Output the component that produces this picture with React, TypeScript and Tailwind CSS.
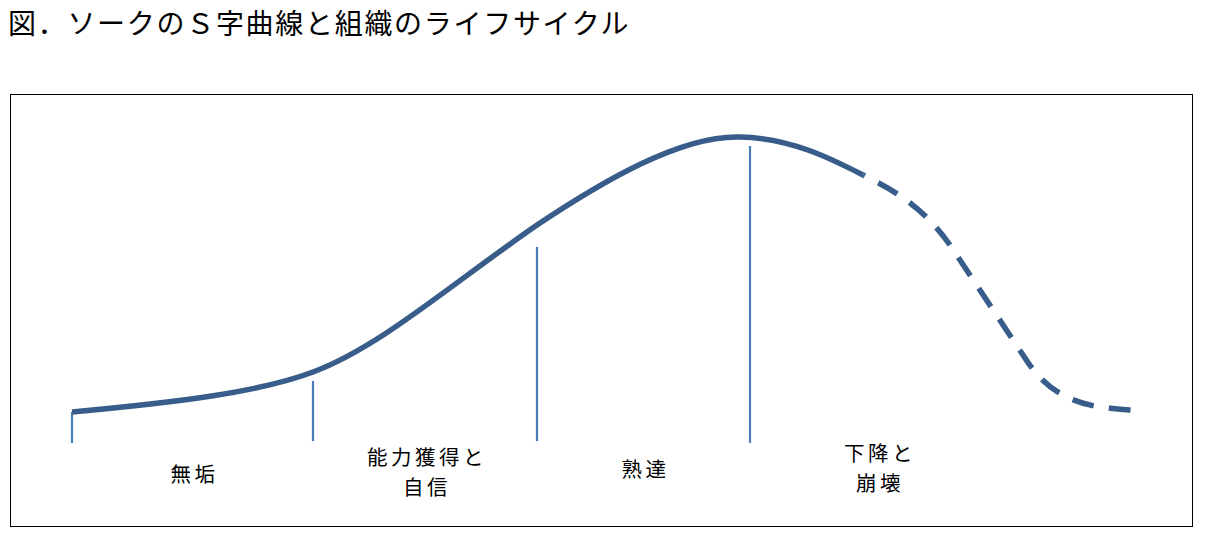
const CURVE = "#385d8a";
const TICK = "#4a7ebb";

const solidPath =
  "M72,412 C180,402 260,392 313,372 C380,347 450,285 537,225 C600,183 680,135 740,137 C790,138 830,158 863,175";
const dashedPath =
  "M863,175 C900,193 925,210 950,245 L1025,358 C1045,390 1070,402 1100,407 C1115,409 1130,410 1140,411";

const ticks = [
  { x: 72, y1: 412, y2: 443 },
  { x: 313, y1: 381, y2: 441 },
  { x: 537, y1: 247, y2: 441 },
  { x: 750, y1: 146, y2: 443 },
];

const labels = [
  { lines: ["無垢"], mt: "mt-[18px]", w: "w-[241px]" },
  { lines: ["能力獲得と", "自信"], mt: "mt-[1px]", w: "w-[224px]" },
  { lines: ["熟達"], mt: "mt-[13px]", w: "w-[213px]" },
  { lines: ["下降と", "崩壊"], mt: "mt-[-3px]", w: "w-[256px]" },
];

export default function App() {
  return (
    <div
      className="w-[1214px] h-[540px] bg-white text-black overflow-hidden"
      style={{ fontFamily: '"Noto Sans CJK JP", "Noto Sans", sans-serif' }}
    >
      <div className="pl-[8px] pt-[2px] text-[28px] leading-[40px] tracking-[1.7px]">
        図．ソークのＳ字曲線と組織のライフサイクル
      </div>

      <div className="ml-[10px] mt-[52px] w-[1183px] h-[433px] border border-black flex flex-col">
        <svg width="1181" height="345" viewBox="11 95 1181 345" className="block shrink-0 overflow-visible">
          {ticks.map((t) => (
            <line key={t.x} x1={t.x} y1={t.y1} x2={t.x} y2={t.y2} stroke={TICK} strokeWidth="2.2" />
          ))}
          <path d={solidPath} fill="none" stroke={CURVE} strokeWidth="5.5" />
          <path
            d={dashedPath}
            fill="none"
            stroke={CURVE}
            strokeWidth="5.5"
            strokeDasharray="22 15"
            strokeDashoffset="20"
          />
        </svg>

        <div className="flex pl-[63px] text-[20.5px] leading-[30px] tracking-[3.5px]">
          {labels.map((l) => (
            <p key={l.lines[0]} className={`${l.w} ${l.mt} text-center`}>
              {l.lines[0]}
              {l.lines[1] && (
                <>
                  <br />
                  {l.lines[1]}
                </>
              )}
            </p>
          ))}
        </div>
      </div>
    </div>
  );
}
